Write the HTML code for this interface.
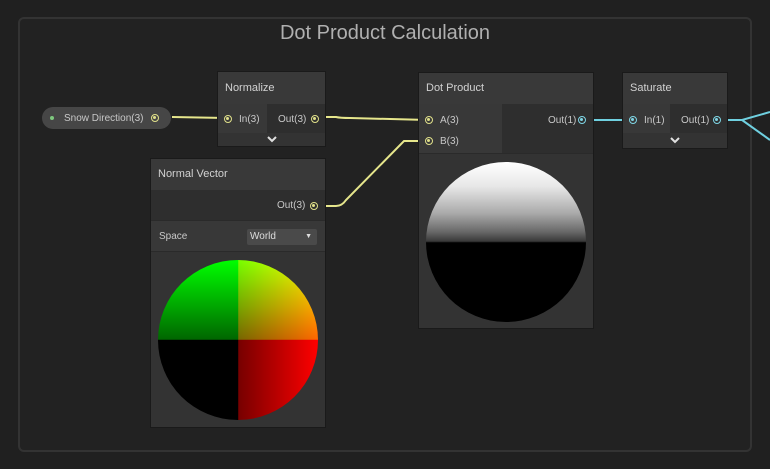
<!DOCTYPE html>
<html><head><meta charset="utf-8"><style>
*{margin:0;padding:0;box-sizing:border-box}
body{width:770px;height:469px;background:#202020;position:relative;overflow:hidden;font-family:"Liberation Sans",sans-serif;font-size:10px;color:#c8c8c8}
.a{position:absolute}
.grp{left:18px;top:17px;width:734px;height:435px;border:2px solid #333;border-radius:6px;background:#222}
.title{left:18px;top:22px;width:734px;text-align:center;font-size:20px;color:#b0b0b0}
.hd{background:#393939;font-size:11px;color:#d2d2d2;padding-left:7px}
.node{box-shadow:0 0 0 1px #1a1a1a}
.in{background:#383838}.out{background:#2e2e2e}
.port{width:8px;height:8px;border-radius:50%;border:1.5px solid;position:absolute}
.y{border-color:#e0e08a}.y::after,.c::after{content:"";position:absolute;left:1px;top:1px;width:3px;height:3px;border-radius:50%}
.y::after{background:#e0e08a}
.c{border-color:#7fd6e6}.c::after{background:#7fd6e6}
.chev{background:#333;text-align:center;position:relative}
.chev svg{position:absolute;left:50%;margin-left:-5px}
</style></head><body>
<div class="a grp"></div>
<div class="a title">Dot Product Calculation</div>

<svg class="a" style="left:0;top:0" width="770" height="469">
<g fill="none" stroke="#e6e68c" stroke-width="2">
<path d="M172 117 L226 118"/>
<path d="M320 117 L336 117 Q340 118 350 118 L428 120"/>
<path d="M318 206 L336 206 Q342 206 346 200 L404 141 L428 141"/>
</g>
<g fill="none" stroke="#6fd0e0" stroke-width="2">
<path d="M586 120 L632 120"/>
<path d="M720 120 L742 120 L770 112"/>
<path d="M742 120 L770 140"/>
</g>
</svg>

<div class="a" style="left:42px;top:107px;width:129px;height:22px;border-radius:11px;background:#464646"></div>
<div class="a" style="left:50px;top:116px;width:4px;height:4px;border-radius:50%;background:#7ec87e"></div>
<div class="a" style="left:64px;top:113px;font-size:10px;color:#c8c8c8">Snow Direction(3)</div>
<div class="a port y" style="left:151px;top:114px"></div>

<!-- Normalize -->
<div class="a node" style="left:218px;top:72px;width:107px;height:74px;background:#333">
<div class="hd" style="height:32px;line-height:32px">Normalize</div>
<div style="display:flex;height:29px;line-height:31px">
<div class="in" style="width:49px;position:relative"><span class="port y" style="left:6px;top:11px"></span><span style="margin-left:21px">In(3)</span></div>
<div class="out" style="width:58px;position:relative"><span style="margin-left:11px">Out(3)</span><span class="port y" style="left:44px;top:11px"></span></div>
</div>
<div class="chev" style="height:13px"><svg width="10" height="8" style="top:3px"><polyline points="1,1 5,5 9,1" fill="none" stroke="#e0e0e0" stroke-width="2"/></svg></div>
</div>

<!-- Normal Vector -->
<div class="a node" style="left:151px;top:159px;width:174px;height:268px;background:#333">
<div class="hd" style="height:31px;line-height:31px">Normal Vector</div>
<div class="out" style="height:30px;line-height:32px;position:relative"><span style="position:absolute;left:126px">Out(3)</span><span class="port y" style="left:159px;top:12px"></span></div>
<div class="in" style="height:32px;line-height:32px;position:relative;border-top:1px solid #2a2a2a;border-bottom:1px solid #2a2a2a"><span style="margin-left:8px">Space</span>
<div class="a" style="left:96px;top:8px;width:70px;height:16px;background:#4a4a4a;border-radius:2px;line-height:16px;padding-left:3px;color:#ddd">World<span class="a" style="right:5px;top:0;font-size:7px">&#9660;</span></div></div>
<div style="position:relative;height:175px;background:#333">
<div class="a" style="left:7px;top:8px;width:160px;height:160px;border-radius:50%;background:linear-gradient(to right,#000 50%,#700 50.3%,#f00 100%),linear-gradient(to top,#000 50%,#060 50.3%,#0f0 100%);background-blend-mode:screen"></div>
</div>
</div>

<!-- Dot Product -->
<div class="a node" style="left:419px;top:73px;width:174px;height:255px;background:#333">
<div class="hd" style="height:31px;line-height:31px">Dot Product</div>
<div style="display:flex;height:49px">
<div class="in" style="width:83px;position:relative">
<span class="port y" style="left:6px;top:12px"></span><span class="a" style="left:21px;top:11px">A(3)</span>
<span class="port y" style="left:6px;top:33px"></span><span class="a" style="left:21px;top:32px">B(3)</span></div>
<div class="out" style="width:91px;position:relative"><span class="a" style="left:46px;top:11px">Out(1)</span><span class="port c" style="left:76px;top:12px"></span></div>
</div>
<div style="position:relative;height:175px;border-top:1px solid #2a2a2a">
<div class="a" style="left:7px;top:8px;width:160px;height:160px;border-radius:50%;background:linear-gradient(#fff 0%,#e8e8e8 15%,#aaa 32%,#666 44%,#3a3a3a 49.5%,#000 50.5%)"></div>
</div>
</div>

<!-- Saturate -->
<div class="a node" style="left:623px;top:73px;width:104px;height:75px;background:#333">
<div class="hd" style="height:31px;line-height:31px">Saturate</div>
<div style="display:flex;height:29px;line-height:33px">
<div class="in" style="width:47px;position:relative"><span class="port c" style="left:6px;top:12px"></span><span style="margin-left:21px">In(1)</span></div>
<div class="out" style="width:57px;position:relative"><span style="margin-left:11px">Out(1)</span><span class="port c" style="left:43px;top:12px"></span></div>
</div>
<div class="chev" style="height:15px"><svg width="10" height="8" style="top:4px"><polyline points="1,1 5,5 9,1" fill="none" stroke="#e0e0e0" stroke-width="2"/></svg></div>
</div>
</body></html>
